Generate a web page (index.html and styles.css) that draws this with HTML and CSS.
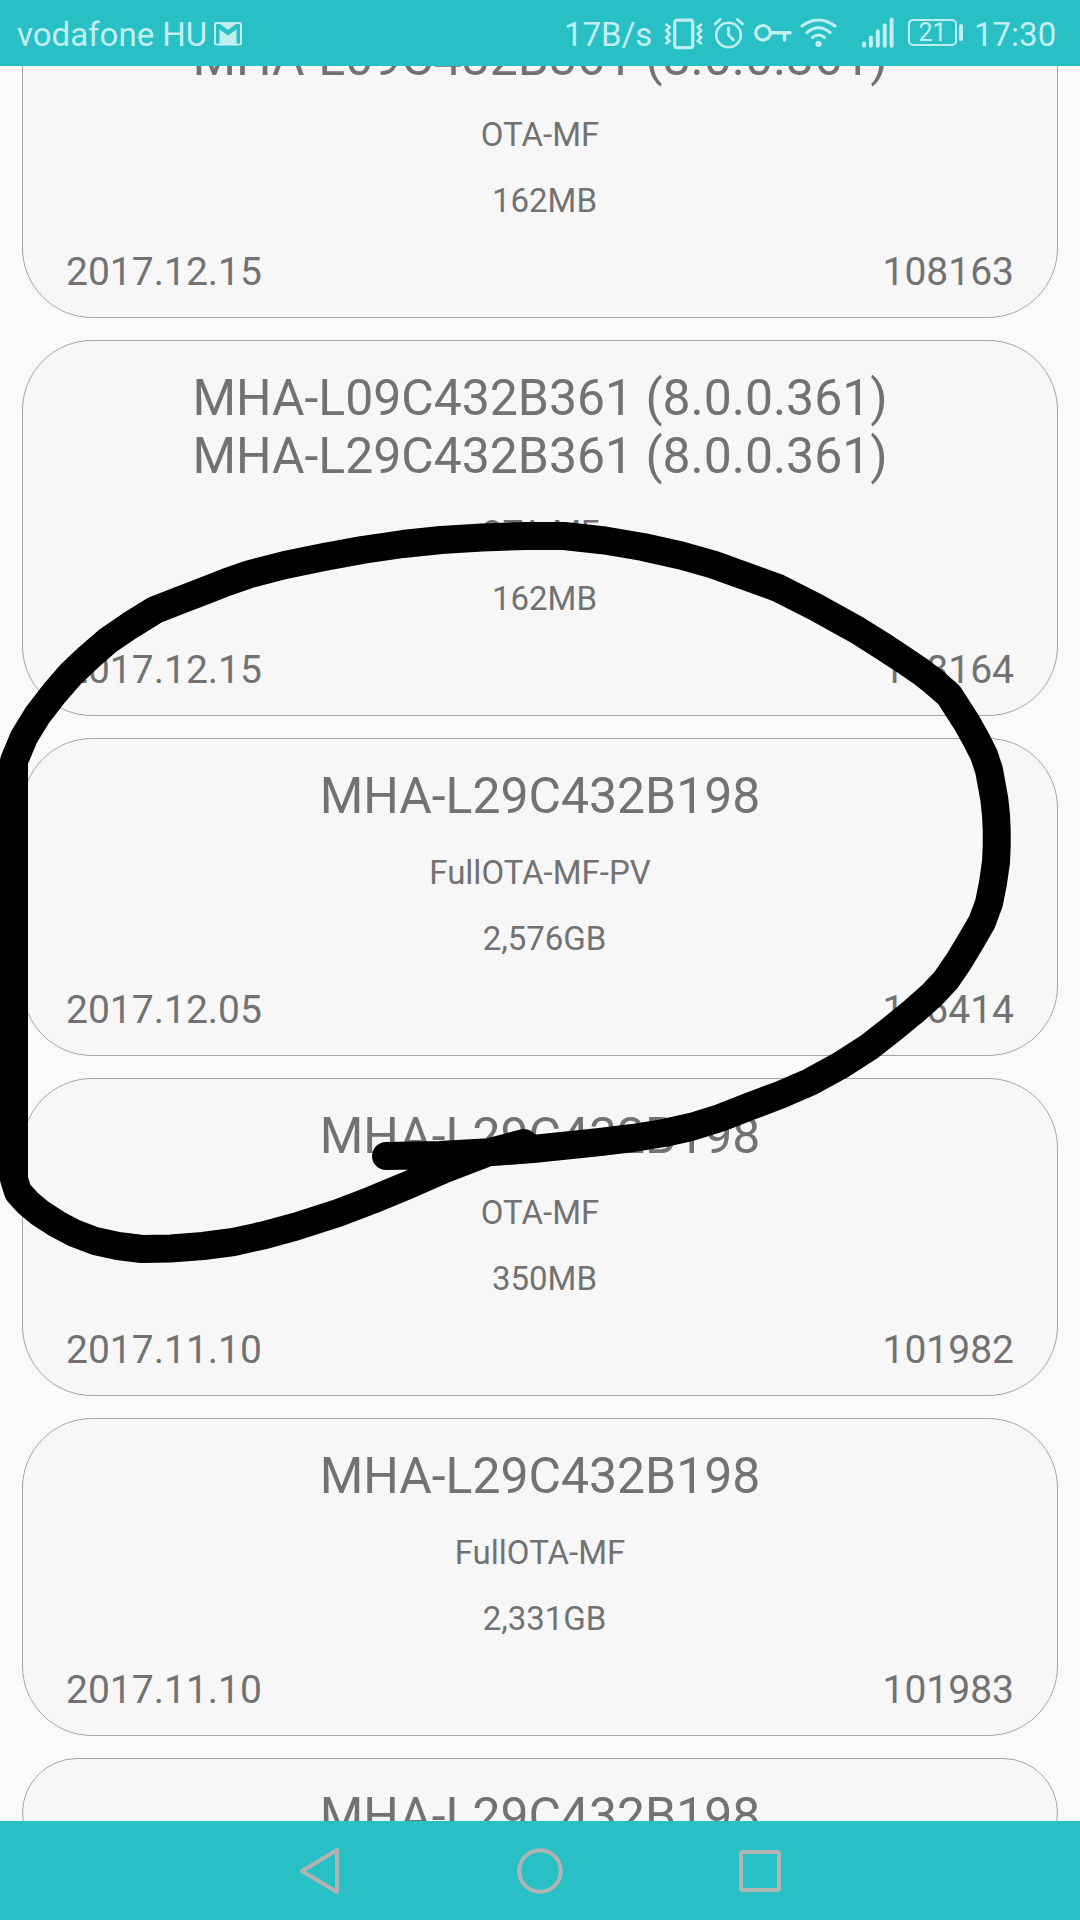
FILE: index.html
```html
<!DOCTYPE html>
<html lang="en">
<head>
    <meta charset="UTF-8">
    <meta name="viewport" content="width=device-width, initial-scale=1.0">
    <title>Firmware List</title>
    <link rel="stylesheet" href="styles.css">
</head>
<body>
    <div class="screen">
        <header class="status-bar">
            <span class="carrier">vodafone HU</span>
            <svg class="icon-mail" width="28" height="24" viewBox="0 0 28 24">
                <rect x="1" y="1" width="26" height="21.5" rx="1.5" fill="none" stroke="#c1efef" stroke-width="2"/>
                <path d="M5.5 22V7.5L14 13.5L22.5 7.5V22Z" fill="#c1efef"/>
                <path d="M4.5 1H23.5L14 8Z" fill="#c1efef"/>
            </svg>

            <span class="speed">17B/s</span>
            <svg class="icon-vibrate" width="40" height="32" viewBox="0 0 40 32">
                <rect x="10.7" y="2.2" width="18" height="27.5" rx="2.5" fill="none" stroke="#c1efef" stroke-width="3.2"/>
                <path d="M1.5 6L5.5 9L2.5 12.5L5.5 16L2.5 19.5L5.5 23L1.5 26M38 6L34 9L37 12.5L34 16L37 19.5L34 23L38 26" fill="none" stroke="#c1efef" stroke-width="2.8"/>
            </svg>
            <svg class="icon-alarm" width="30" height="32" viewBox="0 0 30 32">
                <circle cx="14.5" cy="17" r="12.3" fill="none" stroke="#c1efef" stroke-width="2.6"/>
                <path d="M14.5 10V17L19.5 22" fill="none" stroke="#c1efef" stroke-width="2.8" stroke-linecap="round"/>
                <path d="M1 6L6 1.5M28.5 6L23.5 1.5" stroke="#c1efef" stroke-width="2.8" stroke-linecap="round"/>
            </svg>
            <svg class="icon-key" width="38" height="20" viewBox="0 0 38 20">
                <circle cx="9" cy="9.8" r="7.3" fill="none" stroke="#c1efef" stroke-width="3.2"/>
                <path d="M17 9.8H36M30.5 9.8V17" fill="none" stroke="#c1efef" stroke-width="3.4" stroke-linecap="round"/>
            </svg>
            <svg class="icon-wifi" width="38" height="30" viewBox="0 0 38 30">
                <path d="M2 8Q18.5 -4 35 8M7 14.5Q18.5 5 30 14.5M12.5 19.5Q18.5 14.5 24.5 19.5" fill="none" stroke="#c1efef" stroke-width="3.1" stroke-linecap="round"/>
                <circle cx="18.5" cy="25.8" r="3.1" fill="#c1efef"/>
            </svg>
            <svg class="icon-signal" width="33" height="32" viewBox="0 0 33 32">
                <path d="M2 26.5V28.8M8.9 20.5V28.8M15.8 14.2V28.8M22.7 8.2V28.8M29.6 2.5V28.8" stroke="#c1efef" stroke-width="4" stroke-linecap="round"/>
            </svg>
            <div class="battery">21</div>
            <span class="clock">17:30</span>
        </header>

        <main class="list">
            <div class="card">
                <div class="title">MHA-L09C432B361 (8.0.0.361)</div>
                <div class="info">OTA-MF</div>
                <div class="info size">162MB</div>
                <div class="bottom"><span>2017.12.15</span><span>108163</span></div>
            </div>

            <div class="card">
                <div class="title">MHA-L09C432B361 (8.0.0.361)<br>MHA-L29C432B361 (8.0.0.361)</div>
                <div class="info">OTA-MF</div>
                <div class="info size">162MB</div>
                <div class="bottom"><span>2017.12.15</span><span>108164</span></div>
            </div>

            <div class="card">
                <div class="title">MHA-L29C432B198</div>
                <div class="info">FullOTA-MF-PV</div>
                <div class="info size">2,576GB</div>
                <div class="bottom"><span>2017.12.05</span><span>106414</span></div>
            </div>

            <div class="card">
                <div class="title">MHA-L29C432B198</div>
                <div class="info">OTA-MF</div>
                <div class="info size">350MB</div>
                <div class="bottom"><span>2017.11.10</span><span>101982</span></div>
            </div>

            <div class="card">
                <div class="title">MHA-L29C432B198</div>
                <div class="info">FullOTA-MF</div>
                <div class="info size">2,331GB</div>
                <div class="bottom"><span>2017.11.10</span><span>101983</span></div>
            </div>

            <div class="card">
                <div class="title">MHA-L29C432B198</div>
            </div>
        </main>

        <nav class="nav-bar">
            <button class="nav-btn">
                <svg width="48" height="48" viewBox="0 0 48 48">
                    <path d="M6 24L41 3V45Z"/>
                </svg>
            </button>
            <button class="nav-btn">
                <svg width="48" height="48" viewBox="0 0 48 48">
                    <circle cx="24" cy="24" r="20.8"/>
                </svg>
            </button>
            <button class="nav-btn">
                <svg width="48" height="48" viewBox="0 0 48 48">
                    <rect x="5" y="5" width="38" height="38" rx="1.5"/>
                </svg>
            </button>
        </nav>

        <!-- hand drawn marker around the full package -->
        <svg class="marker" width="1080" height="1920" viewBox="0 0 1080 1920">
            <path d="M386 1156L440 1155L493 1152L533 1149L600 1142L633 1138L664 1133L691 1127L720 1118L748 1107L780 1095L810 1082L841 1065L869 1047L892 1029L914 1011L932 995L946 980L959 961L971 941L982 922L989 903L993 883L996 862L996.700 846V830L996 815L994.300 799L989 770L984 755L977 741L967 723L949 695L933 681L920 671L901.500 658.500L884 647L857 630L815.500 607L778 588L713 564.500L681 555.500L643 547L605 540.500L564 536L525 536L482 537.500L441 540L403 544L362 550L324 557L285 565L250 574L227 582L204 591L178 601L155 610L130 625.500L108 640.500L89 657L71 674L54.500 693L37.500 715L24 737L14 761V1179L18 1192L28 1203L40 1213L57 1224L74 1233L95 1241L118 1246L142 1249L170.500 1248.500L203 1246L233.500 1242L265 1235L296 1226.500L338 1213L372 1200L407 1185.500L445 1169L488 1152.500L524 1143"/>
        </svg>
    </div>
</body>
</html>
```

FILE: styles.css
```css
* {
    margin: 0;
    padding: 0;
    box-sizing: border-box;
}

body {
    font-family: Roboto, 'Liberation Sans', sans-serif;
    background: #fafafa;
    color: #727272;
}

.screen {
    position: relative;
    display: flex;
    flex-direction: column;
    width: 1080px;
    height: 1920px;
    overflow: hidden;
}

/* Status bar */
.status-bar {
    display: flex;
    align-items: flex-start;
    height: 66px;
    padding: 15px 24px 0 17px;
    background: #28bfc5;
    color: #c1efef;
    font-size: 33px;
    line-height: 39px;
    flex-shrink: 0;
    white-space: nowrap;
}

.carrier {
    width: 197px;
}

.speed {
    width: 100px;
    margin-left: auto;
}

.icon-mail {
    margin-top: 7px;
}

.icon-vibrate {
    margin-top: 3px;
    margin-right: 10px;
}

.icon-alarm {
    margin-top: 3px;
    margin-right: 10px;
}

.icon-key {
    margin-top: 8px;
    margin-right: 8px;
}

.icon-wifi {
    margin-top: 3px;
    margin-right: 24px;
}

.icon-signal {
    margin-top: 2px;
    margin-right: 13px;
}

.battery {
    position: relative;
    width: 49px;
    height: 27px;
    margin: 4px 17px 0 0;
    border: 2px solid #c1efef;
    border-radius: 5px;
    font-size: 25px;
    line-height: 24px;
    text-align: center;
}

.battery::after {
    content: '';
    position: absolute;
    top: 3px;
    right: -8px;
    width: 4px;
    height: 17px;
    border-radius: 2px;
    background: #c1efef;
}

.clock {
    width: 82px;
}

/* Firmware list */
.list {
    flex: 1;
    min-height: 0;
    display: flex;
    flex-direction: column;
    justify-content: flex-start;
    gap: 22px;
    padding: 0 22px;
    overflow: hidden;
}

.card {
    flex-shrink: 0;
    padding: 28px 43px 22px;
    background: #f7f7f7;
    border: 1px solid #a6a6a6;
    border-radius: 70px;
    text-align: center;
}

/* first card is scrolled under the status bar */
.card:first-child {
    margin-top: -124px;
    padding-top: 86px;
}

.title {
    font-size: 49.9px;
    line-height: 58px;
}

.info {
    margin-top: 28px;
    font-size: 33px;
    line-height: 38px;
}

.title + .info {
    margin-top: 29px;
}

.size {
    padding-left: 9px;
}

.bottom {
    display: flex;
    justify-content: space-between;
    margin-top: 29px;
    font-size: 39px;
    line-height: 46px;
}

/* Navigation bar */
.nav-bar {
    display: flex;
    justify-content: center;
    flex-shrink: 0;
    height: 99px;
    background: #28bfc5;
}

.nav-btn {
    display: flex;
    align-items: center;
    justify-content: center;
    width: 220px;
    border: none;
    background: none;
}

.nav-btn svg {
    fill: none;
    stroke: #b3b3b3;
    stroke-width: 4;
    stroke-linejoin: round;
}

/* Marker */
.marker {
    position: absolute;
    top: 0;
    left: 0;
    pointer-events: none;
}

.marker path {
    fill: none;
    stroke: #000;
    stroke-width: 28;
    stroke-linecap: round;
    stroke-linejoin: round;
}
```
